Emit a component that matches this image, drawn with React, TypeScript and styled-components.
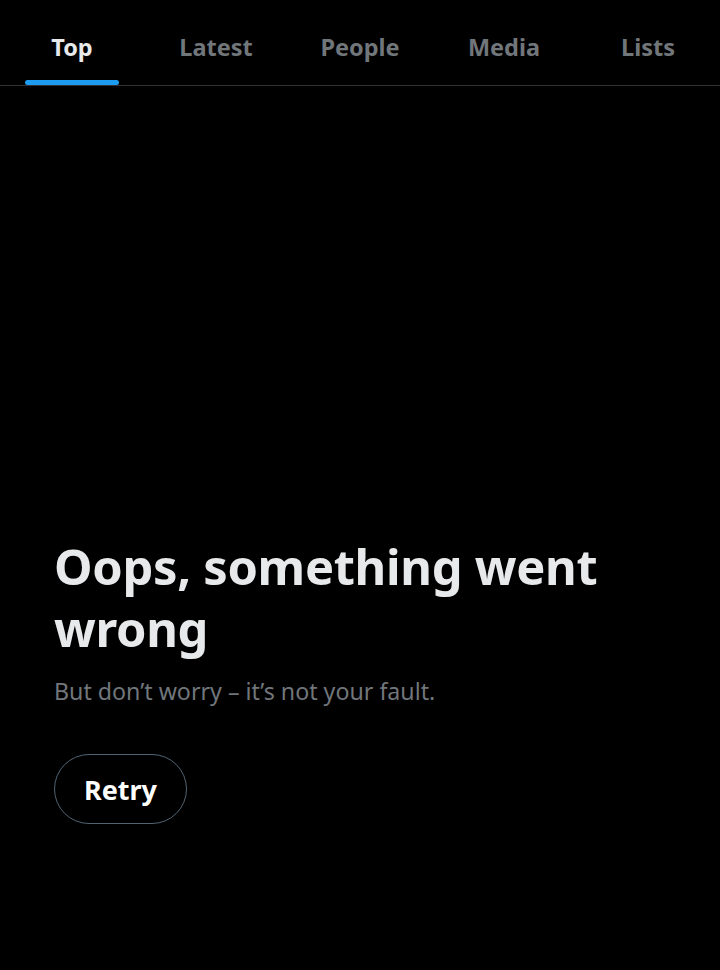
import React, { useState } from "react";
import styled, { createGlobalStyle } from "styled-components";

const GlobalStyle = createGlobalStyle`
  html, body {
    margin: 0;
    padding: 0;
    background: #000;
  }
  body {
    font-family: "Noto Sans", "Liberation Sans", sans-serif;
    color: #e7e9ea;
  }
`;

const Page = styled.div`
  width: 720px;
  min-height: 970px;
  background: #000;
  display: flex;
  flex-direction: column;
`;

const TabBar = styled.nav`
  display: flex;
  height: 85px;
  border-bottom: 1px solid #2f3336;
`;

const Tab = styled.button<{ $active?: boolean }>`
  flex: 1;
  position: relative;
  display: flex;
  align-items: center;
  justify-content: center;
  padding: 8px 0 0;
  background: transparent;
  border: none;
  cursor: pointer;
  font-family: inherit;
  font-size: 23.5px;
  font-weight: 700;
  color: ${props => (props.$active ? "#e7e9ea" : "#71767b")};
`;

const Indicator = styled.span`
  position: absolute;
  left: 25px;
  right: 25px;
  bottom: 0;
  height: 5px;
  border-radius: 3px;
  background: #1d9bf0;
`;

const ErrorBody = styled.section`
  padding: 449px 54px 0;
  display: flex;
  flex-direction: column;
  align-items: flex-start;
`;

const Title = styled.h1`
  margin: 0;
  font-size: 48.8px;
  line-height: 62px;
  font-weight: 700;
  color: #e7e9ea;
  letter-spacing: -0.3px;
`;

const Subtitle = styled.p`
  margin: 17px 0 0;
  font-size: 23.2px;
  line-height: 30px;
  color: #71767b;
`;

const RetryButton = styled.button`
  margin-top: 48px;
  height: 70px;
  padding: 0 29px;
  border-radius: 9999px;
  border: 1.5px solid #536471;
  background: transparent;
  color: #fff;
  font-family: inherit;
  font-size: 27px;
  font-weight: 700;
  cursor: pointer;
`;

const tabs = ["Top", "Latest", "People", "Media", "Lists"];

export default function App() {
  const [active, setActive] = useState("Top");
  return (
    <Page>
      <GlobalStyle />
      <TabBar>
        {tabs.map(t => (
          <Tab key={t} $active={t === active} onClick={() => setActive(t)}>
            {t}
            {t === active && <Indicator />}
          </Tab>
        ))}
      </TabBar>
      <ErrorBody>
        <Title>Oops, something went wrong</Title>
        <Subtitle>But don’t worry – it’s not your fault.</Subtitle>
        <RetryButton>Retry</RetryButton>
      </ErrorBody>
    </Page>
  );
}
